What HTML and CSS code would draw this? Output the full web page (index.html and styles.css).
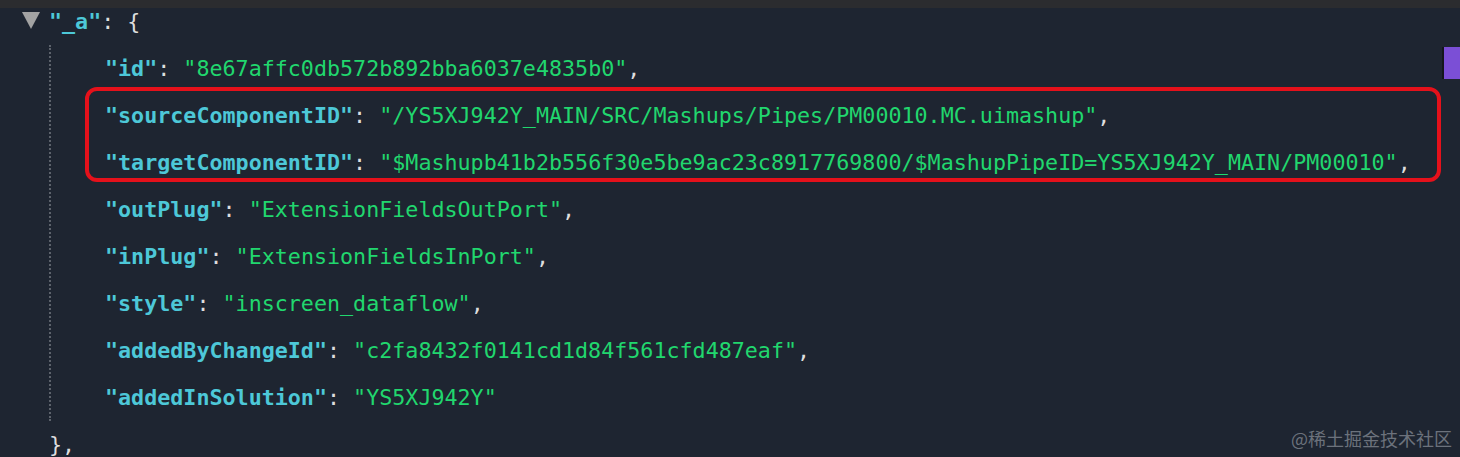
FILE: index.html
```html
<!DOCTYPE html>
<html>
<head>
<meta charset="utf-8">
<link rel="stylesheet" href="styles.css">
</head>
<body>
<div class="topbar"></div>
<div class="viewer">
  <div class="row head"><span class="toggle"></span><span class="key">"_a"</span><span class="p">: {</span></div>
  <div class="children">
    <div class="row"><span class="key">"id"</span><span class="p">: </span><span class="str">"8e67affc0db572b892bba6037e4835b0"</span><span class="p">,</span></div>
    <div class="row"><span class="key">"sourceComponentID"</span><span class="p">: </span><span class="str">"/YS5XJ942Y_MAIN/SRC/Mashups/Pipes/PM00010.MC.uimashup"</span><span class="p">,</span></div>
    <div class="row"><span class="key">"targetComponentID"</span><span class="p">: </span><span class="str">"$Mashupb41b2b556f30e5be9ac23c8917769800/$MashupPipeID=YS5XJ942Y_MAIN/PM00010"</span><span class="p">,</span></div>
    <div class="row"><span class="key">"outPlug"</span><span class="p">: </span><span class="str">"ExtensionFieldsOutPort"</span><span class="p">,</span></div>
    <div class="row"><span class="key">"inPlug"</span><span class="p">: </span><span class="str">"ExtensionFieldsInPort"</span><span class="p">,</span></div>
    <div class="row"><span class="key">"style"</span><span class="p">: </span><span class="str">"inscreen_dataflow"</span><span class="p">,</span></div>
    <div class="row"><span class="key">"addedByChangeId"</span><span class="p">: </span><span class="str">"c2fa8432f0141cd1d84f561cfd487eaf"</span><span class="p">,</span></div>
    <div class="row"><span class="key">"addedInSolution"</span><span class="p">: </span><span class="str">"YS5XJ942Y"</span></div>
  </div>
  <div class="row close"><span class="p">},</span></div>
</div>
<div class="highlight"></div>
<div class="scrollthumb"></div>
<div class="watermark">@稀土掘金技术社区</div>
</body>
</html>
```
FILE: styles.css
```css
html, body {
  margin: 0;
  padding: 0;
  width: 1460px;
  height: 457px;
  overflow: hidden;
  background: #1e2531;
}
body {
  position: relative;
  font-family: "DejaVu Sans Mono", "Liberation Mono", monospace;
  font-size: 21.7px;
  color: #dcdcdc;
}
.topbar {
  height: 8px;
  background: #2b2c2f;
}
.viewer {
  display: flex;
  flex-direction: column;
}
.row {
  height: 47px;
  line-height: 47px;
  white-space: pre;
  display: flex;
  align-items: center;
}
.row.head {
  height: 37px;
  line-height: 28px;
  align-items: flex-start;
  padding-left: 22px;
}
.toggle {
  width: 0;
  height: 0;
  margin-top: 4px;
  margin-right: 9px;
  border-left: 9px solid transparent;
  border-right: 9px solid transparent;
  border-top: 17px solid #a3a3a3;
}
.children {
  margin-left: 49px;
  border-left: 2px dotted #5c626b;
  padding-left: 54px;
  height: 376px;
}
.row.close {
  padding-left: 49px;
}
.key {
  color: #4dc8d8;
  font-weight: bold;
}
.str {
  color: #21d76e;
}
.p {
  color: #dedede;
}
.highlight {
  position: absolute;
  left: 85px;
  top: 87px;
  width: 1348px;
  height: 87px;
  border: 4px solid #e5111b;
  border-radius: 12px;
}
.scrollthumb {
  position: absolute;
  right: 0;
  top: 47px;
  width: 16px;
  height: 32px;
  background: #7b4fd6;
  border-left: 2px solid #14161d;
}
.watermark {
  position: absolute;
  right: 8px;
  top: 425px;
  font-family: "Noto Sans CJK SC", sans-serif;
  font-size: 18px;
  line-height: 26px;
  color: #6c727c;
}
```
